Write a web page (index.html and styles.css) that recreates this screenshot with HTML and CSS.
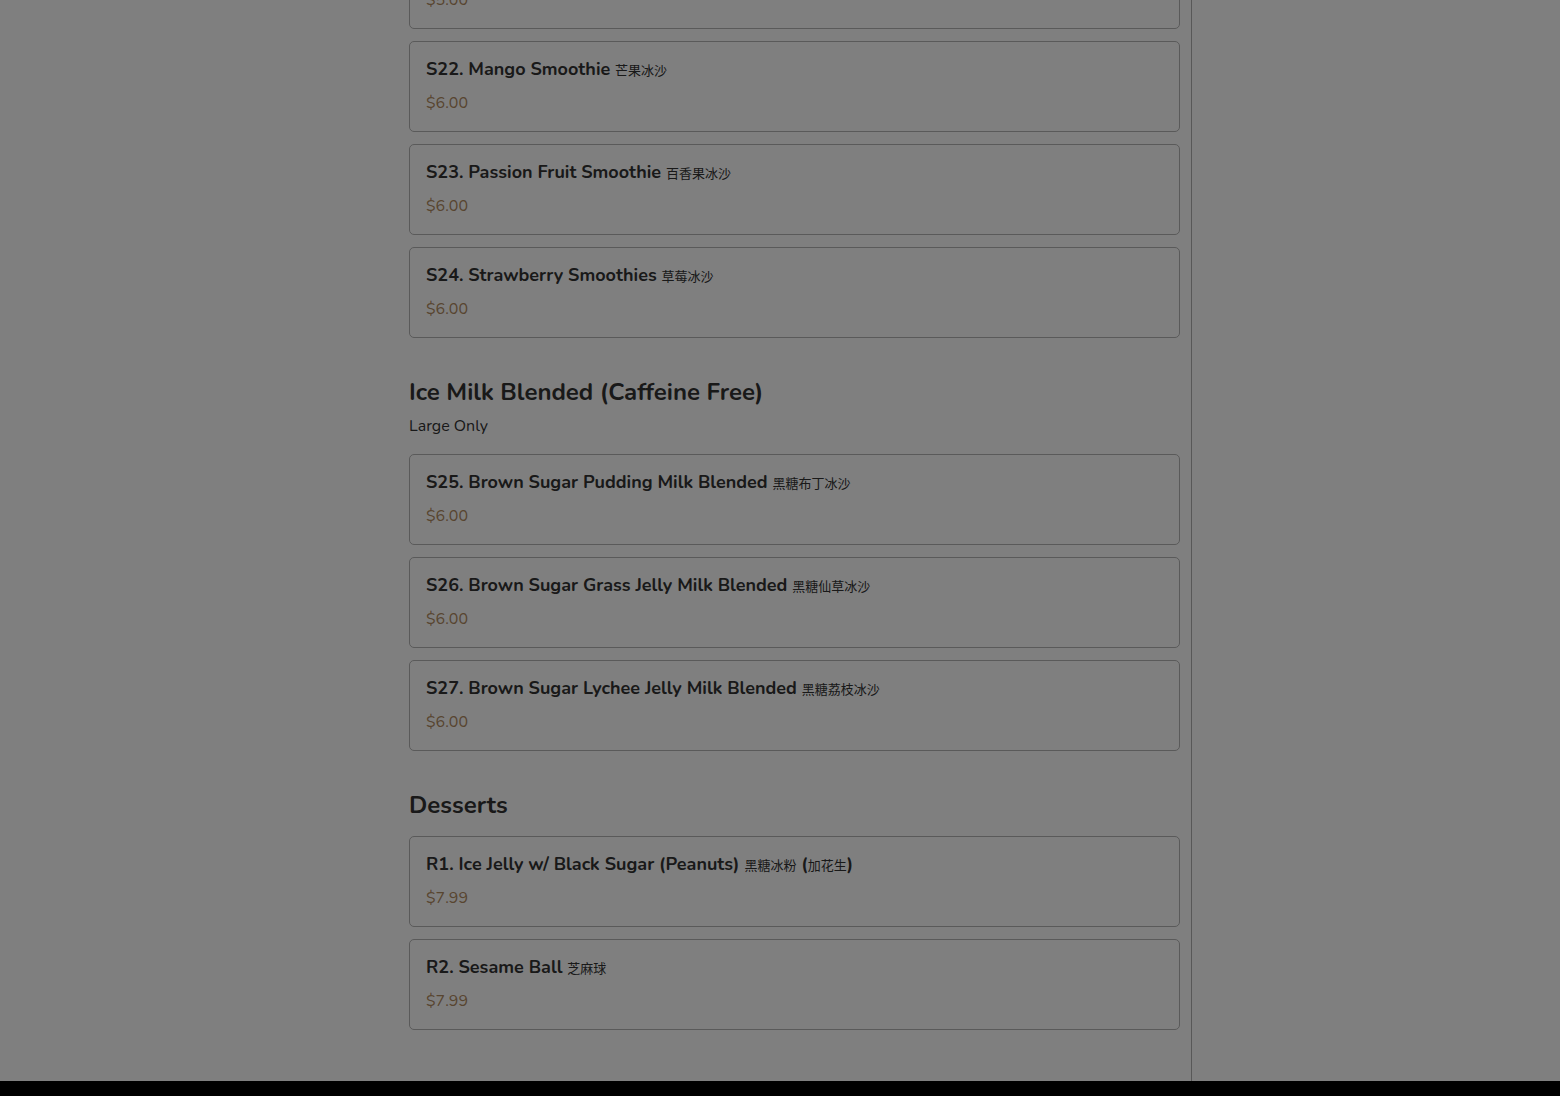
FILE: index.html
```html
<!DOCTYPE html>
<html lang="en">
<head>
<meta charset="utf-8">
<title>Menu</title>
<link rel="stylesheet" href="styles.css">
</head>
<body>
<div class="layout">
  <aside class="side-left"></aside>
  <main class="menu">
    <div class="menu-inner">
      <section class="section">
        <div class="items">
          <div class="card">
            <div class="item-name">S21. Taro Smoothie <span class="zh">芋頭冰沙</span></div>
            <div class="item-price">$5.00</div>
          </div>
          <div class="card">
            <div class="item-name">S22. Mango Smoothie <span class="zh">芒果冰沙</span></div>
            <div class="item-price">$6.00</div>
          </div>
          <div class="card">
            <div class="item-name">S23. Passion Fruit Smoothie <span class="zh">百香果冰沙</span></div>
            <div class="item-price">$6.00</div>
          </div>
          <div class="card">
            <div class="item-name">S24. Strawberry Smoothies <span class="zh">草莓冰沙</span></div>
            <div class="item-price">$6.00</div>
          </div>
        </div>
      </section>

      <section class="section">
        <h2 class="section-title">Ice Milk Blended (Caffeine Free)</h2>
        <p class="section-desc">Large Only</p>
        <div class="items">
          <div class="card">
            <div class="item-name">S25. Brown Sugar Pudding Milk Blended <span class="zh">黑糖布丁冰沙</span></div>
            <div class="item-price">$6.00</div>
          </div>
          <div class="card">
            <div class="item-name">S26. Brown Sugar Grass Jelly Milk Blended <span class="zh">黑糖仙草冰沙</span></div>
            <div class="item-price">$6.00</div>
          </div>
          <div class="card">
            <div class="item-name">S27. Brown Sugar Lychee Jelly Milk Blended <span class="zh">黑糖荔枝冰沙</span></div>
            <div class="item-price">$6.00</div>
          </div>
        </div>
      </section>

      <section class="section">
        <h2 class="section-title">Desserts</h2>
        <div class="items">
          <div class="card">
            <div class="item-name">R1. Ice Jelly w/ Black Sugar (Peanuts) <span class="zh">黑糖冰粉</span> (<span class="zh">加花生</span>)</div>
            <div class="item-price">$7.99</div>
          </div>
          <div class="card">
            <div class="item-name">R2. Sesame Ball <span class="zh">芝麻球</span></div>
            <div class="item-price">$7.99</div>
          </div>
        </div>
      </section>
    </div>
  </main>
  <aside class="side-right"></aside>
</div>
<div class="overlay"></div>
<div class="sheet-edge"></div>
</body>
</html>
```
FILE: styles.css
```css
html, body {
  margin: 0;
  padding: 0;
  height: 100%;
  overflow: hidden;
  background: #ffffff;
}

body {
  font-family: "Nunito", "Lato", "Noto Sans CJK SC", sans-serif;
  color: #333333;
}

.layout {
  display: grid;
  grid-template-columns: 409px 783px 1fr;
  height: 100vh;
}

.menu {
  border-right: 1px solid #b0b0b0;
  padding-right: 11px;
  overflow: hidden;
}

.menu-inner {
  margin-top: -62px;
}

.section + .section {
  margin-top: 40px;
}

.section-title {
  margin: 0;
  font-size: 24px;
  font-weight: 700;
  line-height: 1.2;
  color: #333333;
}

.section-desc {
  margin: 7px 0 0;
  font-size: 16px;
  line-height: 1.5;
  color: #333333;
}

.section-title + .items,
.section-desc + .items {
  margin-top: 16px;
}

.items {
  display: flex;
  flex-direction: column;
  gap: 12px;
}

.card {
  border: 1px solid #b4b4b4;
  border-radius: 5px;
  padding: 16px;
  background: #ffffff;
}

.item-name {
  font-size: 18px;
  font-weight: 700;
  line-height: 22px;
  color: #333333;
}

.zh {
  font-family: "Noto Sans CJK SC", sans-serif;
  font-weight: 400;
  font-size: 13px;
  line-height: 1;
}

.item-price {
  margin-top: 11px;
  font-size: 16px;
  line-height: 1.5;
  color: #b08a60;
}

.overlay {
  position: fixed;
  inset: 0;
  background: rgba(0, 0, 0, 0.5);
}

.sheet-edge {
  position: fixed;
  left: 0;
  right: 0;
  bottom: 0;
  height: 15px;
  background: #000000;
}
```
